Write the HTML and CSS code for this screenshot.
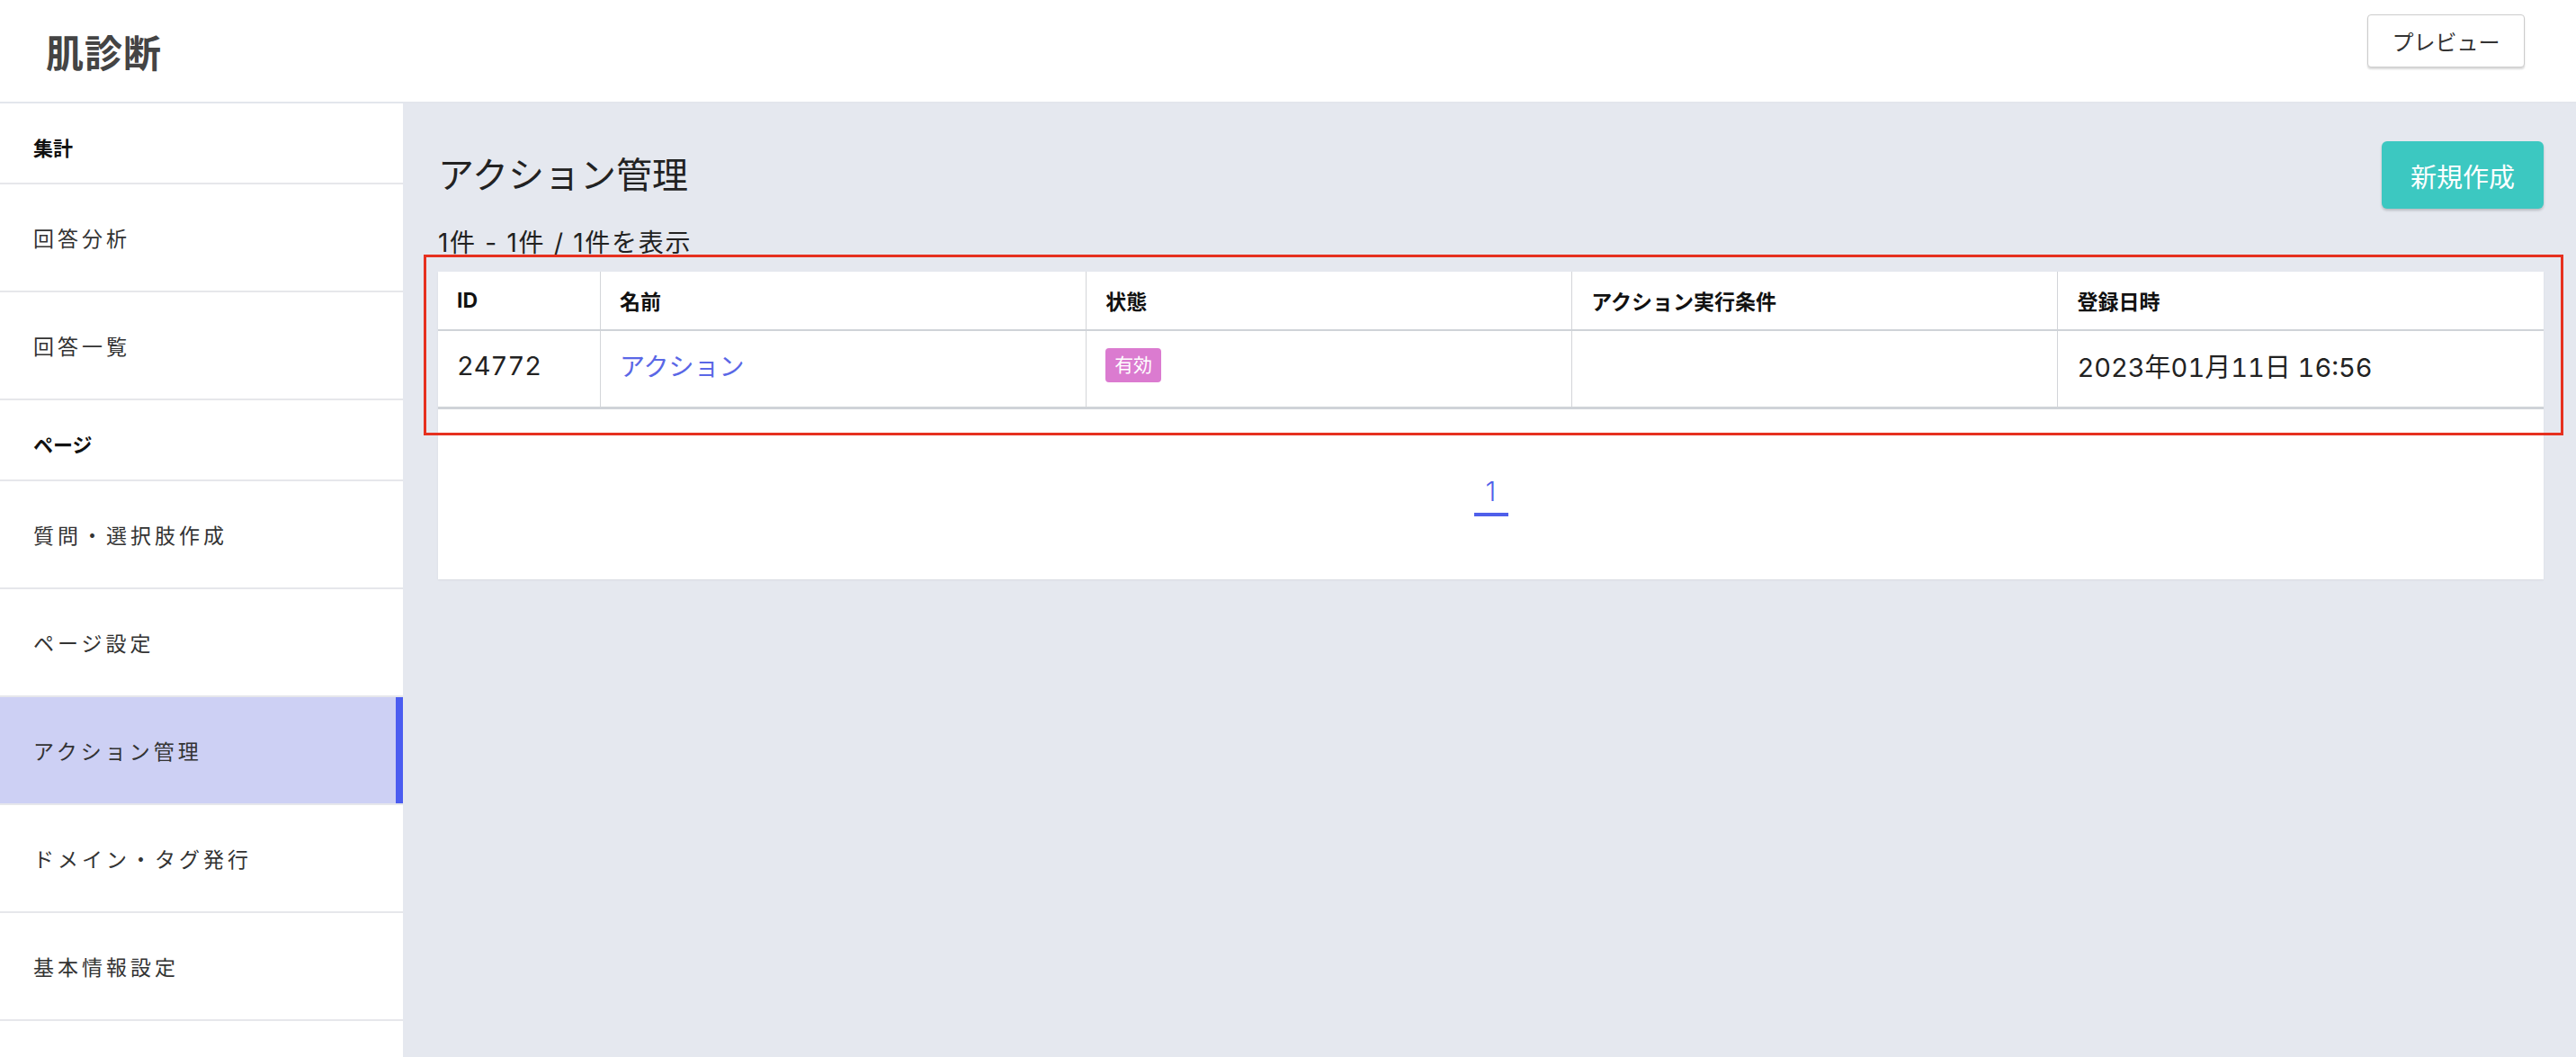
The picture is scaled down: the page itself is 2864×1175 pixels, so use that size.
FILE: index.html
```html
<!DOCTYPE html>
<html lang="ja">

<head>
    <meta charset="UTF-8">
    <meta name="viewport" content="width=device-width, initial-scale=1.0">
    <title>肌診断 - アクション管理</title>
    <link rel="stylesheet" href="styles.css">
</head>

<body>
    <header class="topbar">
        <div class="logo">肌診断</div>
        <button class="btn-preview">プレビュー</button>
    </header>

    <div class="layout">
        <!-- Sidebar -->
        <nav class="sidebar">
            <div class="nav-section">集計</div>
            <a class="nav-item" href="#">回答分析</a>
            <a class="nav-item" href="#">回答一覧</a>
            <div class="nav-section">ページ</div>
            <a class="nav-item" href="#">質問・選択肢作成</a>
            <a class="nav-item" href="#">ページ設定</a>
            <a class="nav-item active" href="#">アクション管理</a>
            <a class="nav-item" href="#">ドメイン・タグ発行</a>
            <a class="nav-item" href="#">基本情報設定</a>
        </nav>

        <!-- Main -->
        <main class="content">
            <div class="page-head">
                <h1>アクション管理</h1>
                <button class="btn-new">新規作成</button>
            </div>
            <p class="count">1件 - 1件 / 1件を表示</p>

            <div class="card">
                <div class="highlight"></div>
                <table class="list">
                    <thead>
                        <tr>
                            <th class="col-id">ID</th>
                            <th>名前</th>
                            <th>状態</th>
                            <th>アクション実行条件</th>
                            <th>登録日時</th>
                        </tr>
                    </thead>
                    <tbody>
                        <tr>
                            <td>24772</td>
                            <td><a class="name" href="#">アクション</a></td>
                            <td><span class="badge">有効</span></td>
                            <td></td>
                            <td>2023年01月11日 16:56</td>
                        </tr>
                    </tbody>
                </table>
                <div class="pager">
                    <a class="current" href="#">1</a>
                </div>
            </div>
        </main>
    </div>
</body>

</html>
```

FILE: styles.css
```css
body {
    margin: 0;
    font-family: Inter, "Noto Sans CJK JP", sans-serif;
    color: #222;
    background: #fff;
}

a {
    text-decoration: none;
}

button {
    font-family: inherit;
    cursor: pointer;
}

/* Header */
.topbar {
    height: 115px;
    box-sizing: border-box;
    display: flex;
    justify-content: space-between;
    align-items: center;
    padding: 0 57px 0 51px;
    border-bottom: 2px solid #e3e6ec;
}

.logo {
    font-family: "Noto Sans CJK JP", sans-serif;
    font-size: 42px;
    font-weight: bold;
    color: #444;
    letter-spacing: 1px;
}

.btn-preview {
    align-self: flex-start;
    margin-top: 16px;
    width: 175px;
    height: 59px;
    background: #fff;
    border: 1px solid #ccc;
    border-radius: 4px;
    box-shadow: 0 2px 2px rgba(0, 0, 0, 0.15);
    font-size: 24px;
    color: #333;
}

/* Layout */
.layout {
    display: flex;
    min-height: calc(100vh - 115px);
}

.sidebar {
    width: 448px;
    flex-shrink: 0;
    background: #fff;
}

.nav-section {
    height: 90px;
    box-sizing: border-box;
    display: flex;
    align-items: center;
    padding: 8px 0 0 37px;
    font-size: 22px;
    font-weight: bold;
    color: #111;
    border-bottom: 2px solid #e6e7eb;
}

.nav-item {
    height: 120px;
    box-sizing: border-box;
    display: flex;
    align-items: center;
    padding-left: 37px;
    font-size: 23px;
    letter-spacing: 4px;
    color: #333;
    border-bottom: 2px solid #e6e7eb;
}

.nav-item.active {
    background: #cdd0f4;
    box-shadow: inset -8px 0 0 #4b5cf0;
}

.content {
    flex: 1;
    background: #e5e8ef;
    padding: 42px 36px 0 39px;
}

.page-head {
    display: flex;
    justify-content: space-between;
    align-items: center;
}

.page-head h1 {
    margin: 0;
    padding-bottom: 6px;
    font-size: 40px;
    font-weight: normal;
    color: #222;
}

.btn-new {
    width: 180px;
    height: 75px;
    background: #3cc8c1;
    color: #fff;
    border: none;
    border-radius: 6px;
    box-shadow: 0 2px 3px rgba(0, 0, 0, 0.2);
    font-size: 29px;
}

.count {
    margin: 20px 0 14px;
    font-size: 28px;
    line-height: 36px;
    letter-spacing: 1.7px;
    color: #222;
}

/* Table card */
.card {
    position: relative;
    background: #fff;
    box-shadow: 0 1px 2px rgba(0, 0, 0, 0.06);
}

.highlight {
    position: absolute;
    top: -19px;
    left: -16px;
    right: -22px;
    height: 201px;
    box-sizing: border-box;
    border: 3px solid #e6301f;
    pointer-events: none;
}

.list {
    width: 100%;
    border-collapse: collapse;
    table-layout: fixed;
}

.list th {
    height: 64px;
    padding: 0 21px;
    text-align: left;
    font-size: 23px;
    font-weight: bold;
    color: #111;
    border-bottom: 2px solid #cfd3d8;
    border-right: 1px solid #d3d5d9;
}

.list td {
    height: 76px;
    padding: 0 21px 8px;
    font-size: 29px;
    font-variant-numeric: tabular-nums;
    color: #222;
    border-bottom: 3px solid #cfd3d8;
    border-right: 1px solid #d3d5d9;
}

.list th:last-child,
.list td:last-child {
    border-right: none;
}

.list .col-id {
    width: 138px;
}

.name {
    font-size: 28px;
    color: #5a67e6;
}

.badge {
    display: inline-block;
    padding: 0 10px;
    height: 38px;
    line-height: 38px;
    border-radius: 4px;
    background: #db7bd0;
    color: #fff;
    font-size: 21px;
    vertical-align: 3px;
}

.pager {
    text-align: center;
    padding: 73px 0 70px;
}

.pager .current {
    display: inline-block;
    width: 38px;
    font-size: 30px;
    font-weight: 300;
    line-height: 36px;
    padding-bottom: 6px;
    color: #4f5fea;
    border-bottom: 4px solid #4f5fea;
}
```
